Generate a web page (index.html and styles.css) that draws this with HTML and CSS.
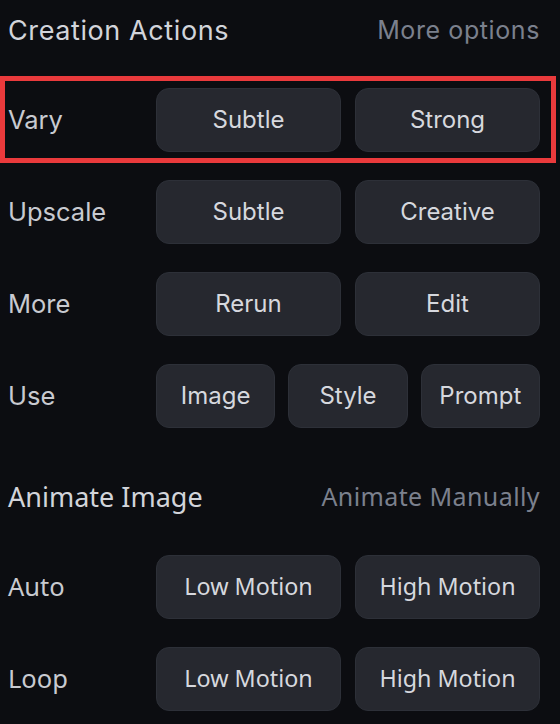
FILE: index.html
```html
<!DOCTYPE html>
<html>
<head>
<meta charset="utf-8">
<link rel="stylesheet" href="styles.css">
</head>
<body>
<div class="panel">
  <div class="section-head">
    <span class="title">Creation Actions</span>
    <span class="link">More options</span>
  </div>
  <div class="rows">
    <div class="row highlighted">
      <span class="label">Vary</span>
      <div class="btns two">
        <button class="btn">Subtle</button>
        <button class="btn">Strong</button>
      </div>
    </div>
    <div class="row">
      <span class="label">Upscale</span>
      <div class="btns two">
        <button class="btn">Subtle</button>
        <button class="btn">Creative</button>
      </div>
    </div>
    <div class="row">
      <span class="label">More</span>
      <div class="btns two">
        <button class="btn">Rerun</button>
        <button class="btn">Edit</button>
      </div>
    </div>
    <div class="row">
      <span class="label">Use</span>
      <div class="btns three">
        <button class="btn">Image</button>
        <button class="btn">Style</button>
        <button class="btn">Prompt</button>
      </div>
    </div>
  </div>

  <div class="section-head second alt">
    <span class="title">Animate Image</span>
    <span class="link">Animate Manually</span>
  </div>
  <div class="rows alt">
    <div class="row">
      <span class="label">Auto</span>
      <div class="btns two">
        <button class="btn">Low Motion</button>
        <button class="btn">High Motion</button>
      </div>
    </div>
    <div class="row">
      <span class="label">Loop</span>
      <div class="btns two">
        <button class="btn">Low Motion</button>
        <button class="btn">High Motion</button>
      </div>
    </div>
  </div>
</div>
</body>
</html>
```

FILE: styles.css
```css
html, body {
  margin: 0;
  padding: 0;
  background: #0c0d11;
}
body {
  font-family: Inter, "Noto Sans", sans-serif;
  width: 560px;
  height: 724px;
  overflow: hidden;
}
.panel {
  padding: 0 20px 0 8px;
}
.section-head {
  height: 60px;
  display: flex;
  align-items: center;
  justify-content: space-between;
}
.section-head .title {
  font-size: 27px;
  color: #d2d4da;
  letter-spacing: 0.6px;
}
.section-head .link {
  font-size: 25px;
  color: #7b808d;
  letter-spacing: 0.6px;
}
.section-head.second {
  margin-top: 38px;
}
.rows {
  display: flex;
  flex-direction: column;
  gap: 28px;
  margin-top: 28px;
}
.rows.alt {
  margin-top: 29px;
}
.row {
  position: relative;
  display: flex;
  align-items: center;
  height: 64px;
}
.row.highlighted::after {
  content: "";
  position: absolute;
  left: -8px;
  right: -16px;
  top: -12px;
  bottom: -11px;
  border: 5px solid #ea3a3c;
  pointer-events: none;
}
.label {
  width: 148px;
  flex: none;
  font-size: 25.5px;
  color: #c8cad0;
  margin-top: -2px;
}
.btns {
  flex: 1;
  display: grid;
  height: 64px;
}
.btns.two {
  grid-template-columns: 1fr 1fr;
  column-gap: 14px;
}
.btns.three {
  grid-template-columns: 1fr 1fr 1fr;
  column-gap: 13px;
}
.btn {
  font-family: inherit;
  font-size: 24px;
  color: #d6d8de;
  background: #26282f;
  border: 1px solid #2d3038;
  border-radius: 13px;
  padding: 0 0 2px;
  height: 64px;
}
.alt, .alt .btn {
  font-family: "Noto Sans", sans-serif;
}
.alt .title {
  font-size: 27px;
  letter-spacing: 0;
}
.alt .link {
  font-size: 25px;
  letter-spacing: 0.4px;
}
.alt .btn {
  font-size: 23.3px;
}
.alt .label {
  font-size: 25.5px;
}
```
